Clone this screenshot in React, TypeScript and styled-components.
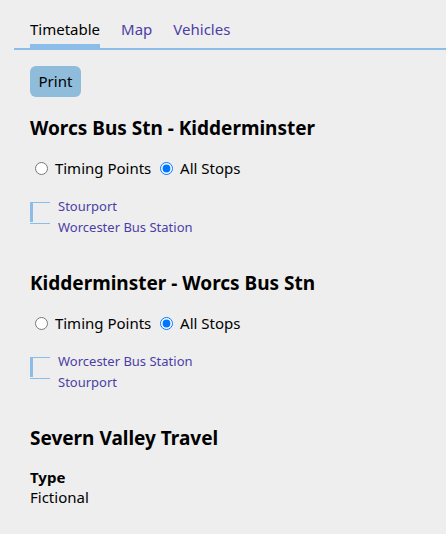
import React from "react";
import styled, { createGlobalStyle } from "styled-components";

const Global = createGlobalStyle`
  html, body { margin: 0; padding: 0; background: #eeeeee; }
  body { font-family: "Noto Sans", "Open Sans", sans-serif; color: #000; font-size: 15px; }
`;

const Page = styled.div`
  padding: 0 0 0 14px;
`;

const Nav = styled.nav`
  display: flex;
  padding-left: 16px;
  border-bottom: 2px solid #8bbde8;
`;

const Tab = styled.a<{ $active?: boolean }>`
  display: block;
  padding: 17px 0 3px;
  margin-right: 21px;
  line-height: 24px;
  font-size: 15px;
  text-decoration: none;
  color: ${(p) => (p.$active ? "#000" : "#4b3ea6")};
  border-bottom: 4px solid ${(p) => (p.$active ? "#8bbde8" : "transparent")};
`;

const Content = styled.main`
  padding: 16px 16px 20px 16px;
`;

const PrintButton = styled.button`
  font-family: inherit;
  font-size: 15px;
  line-height: 21px;
  padding: 5px 8.5px;
  border: 0;
  border-radius: 6px;
  background: #8fbcdb;
  color: #000;
`;

const Heading = styled.h2<{ $top: number }>`
  margin: ${(p) => p.$top}px 0 0;
  font-size: 19px;
  line-height: 24px;
  font-weight: 700;
`;

const RadioRow = styled.div`
  margin-top: 16px;
  line-height: 24px;
  font-size: 15px;
`;

const Radio = styled.input`
  width: 13px;
  height: 13px;
  margin: 3px 3px 0 5px;
  vertical-align: -1px;
`;

const Stops = styled.div`
  display: flex;
  margin-top: 16px;
`;

const Bracket = styled.div`
  width: 20px;
  margin-right: 8px;
  padding-top: 6px;
  display: flex;
  flex-direction: column;
`;

const BracketTop = styled.div`
  height: 19px;
  border-top: 1px solid #8bbde8;
  border-left: 3px solid #8bbde8;
`;

const BracketBottom = styled.div`
  margin-top: 1px;
  border-top: 1px solid #8bbde8;
`;

const StopList = styled.ul`
  list-style: none;
  margin: 0;
  padding: 0;
`;

const Stop = styled.li`
  font-size: 13px;
  line-height: 21px;
`;

const StopLink = styled.a`
  color: #4b3ea6;
  text-decoration: none;
`;

const Label = styled.div`
  margin-top: 17px;
  font-weight: 700;
  line-height: 20px;
`;

const Value = styled.div`
  line-height: 20px;
`;

function Section({ title, top, name, stops }: { title: string; top: number; name: string; stops: string[] }) {
  return (
    <>
      <Heading $top={top}>{title}</Heading>
      <RadioRow>
        <label>
          <Radio type="radio" name={name} /> Timing Points
        </label>{" "}
        <label>
          <Radio type="radio" name={name} defaultChecked /> All Stops
        </label>
      </RadioRow>
      <Stops>
        <Bracket>
          <BracketTop />
          <BracketBottom />
        </Bracket>
        <StopList>
          {stops.map((s) => (
            <Stop key={s}>
              <StopLink href="#">{s}</StopLink>
            </Stop>
          ))}
        </StopList>
      </Stops>
    </>
  );
}

export default function App() {
  return (
    <Page>
      <Global />
      <Nav>
        <Tab $active href="#">Timetable</Tab>
        <Tab href="#">Map</Tab>
        <Tab href="#">Vehicles</Tab>
      </Nav>
      <Content>
        <PrintButton>Print</PrintButton>
        <Section title="Worcs Bus Stn - Kidderminster" top={19} name="a" stops={["Stourport", "Worcester Bus Station"]} />
        <Section title="Kidderminster - Worcs Bus Stn" top={33} name="b" stops={["Worcester Bus Station", "Stourport"]} />
        <Heading $top={33}>Severn Valley Travel</Heading>
        <Label>Type</Label>
        <Value>Fictional</Value>
      </Content>
    </Page>
  );
}
